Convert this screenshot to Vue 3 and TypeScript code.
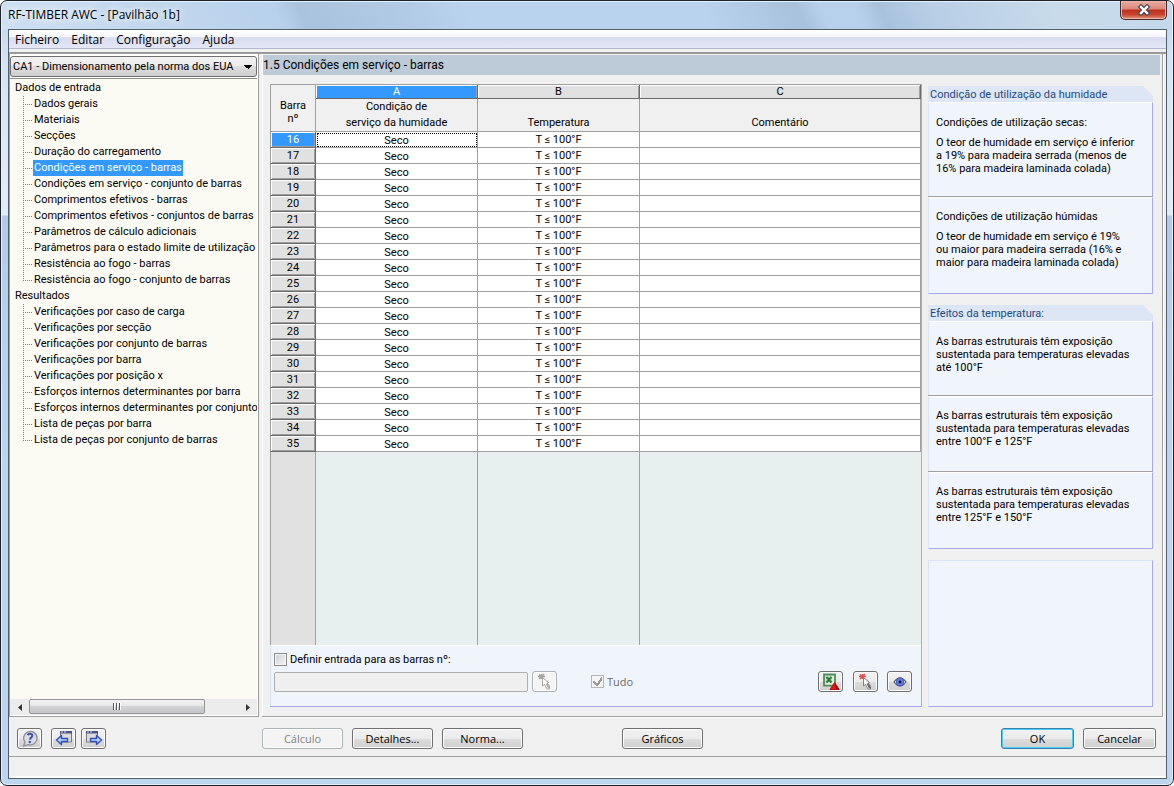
<script setup lang="ts">
import { ref } from 'vue'

interface Branch {
  label: string
  items: string[]
}

interface Note {
  heading?: string
  text: string[]
}

const menus: string[] = ['Ficheiro', 'Editar', 'Configuração', 'Ajuda']

const tree: Branch[] = [
  {
    label: 'Dados de entrada',
    items: [
      'Dados gerais',
      'Materiais',
      'Secções',
      'Duração do carregamento',
      'Condições em serviço - barras',
      'Condições em serviço - conjunto de barras',
      'Comprimentos efetivos - barras',
      'Comprimentos efetivos - conjuntos de barras',
      'Parâmetros de cálculo adicionais',
      'Parâmetros para o estado limite de utilização',
      'Resistência ao fogo - barras',
      'Resistência ao fogo - conjunto de barras',
    ],
  },
  {
    label: 'Resultados',
    items: [
      'Verificações por caso de carga',
      'Verificações por secção',
      'Verificações por conjunto de barras',
      'Verificações por barra',
      'Verificações por posição x',
      'Esforços internos determinantes por barra',
      'Esforços internos determinantes por conjunto',
      'Lista de peças por barra',
      'Lista de peças por conjunto de barras',
    ],
  },
]

const humidity: Note[] = [
  {
    heading: 'Condições de utilização secas:',
    text: ['O teor de humidade em serviço é inferior', 'a 19% para madeira serrada (menos de', '16% para madeira laminada colada)'],
  },
  {
    heading: 'Condições de utilização húmidas',
    text: ['O teor de humidade em serviço é 19%', 'ou maior para madeira serrada (16% e', 'maior para madeira laminada colada)'],
  },
]

const temperature: Note[] = ['até 100°F', 'entre 100°F e 125°F', 'entre 125°F e 150°F'].map((range) => ({
  text: ['As barras estruturais têm exposição', 'sustentada para temperaturas elevadas', range],
}))

const members: number[] = Array.from({ length: 20 }, (_, i) => 16 + i)

const page = ref('Condições em serviço - barras')
const member = ref(16)
const setInput = ref(false)
const all = ref(true)
</script>

<template>
  <div class="window">
    <header class="titlebar">
      <h1>RF-TIMBER AWC - [Pavilhão 1b]</h1>
      <button class="close" type="button" aria-label="Fechar">
        <svg width="14" height="12" viewBox="0 0 14 12">
          <path d="M4 3 10 9M10 3 4 9" stroke="#45485c" stroke-width="4.600" stroke-linecap="square" />
          <path d="M4 3 10 9M10 3 4 9" stroke="#fff" stroke-width="2.400" stroke-linecap="square" />
        </svg>
      </button>
    </header>

    <div class="client">
      <nav class="menubar">
        <button v-for="m in menus" :key="m" type="button">{{ m }}</button>
      </nav>

      <div class="work">
        <aside class="side">
          <div class="case">
            <select aria-label="Caso">
              <option>CA1 - Dimensionamento pela norma dos EUA</option>
            </select>
          </div>
          <ul class="tree">
            <li v-for="b in tree" :key="b.label">
              <span class="root">{{ b.label }}</span>
              <ul class="leaves">
                <li v-for="item in b.items" :key="item">
                  <button type="button" :class="{ selected: item === page }" @click="page = item">{{ item }}</button>
                </li>
              </ul>
            </li>
          </ul>
          <div class="hscroll">
            <button class="arrow" type="button" aria-label="Esquerda">
              <svg width="4" height="7" viewBox="0 0 4 7"><path d="M4 0v7L0 3.500z" fill="#333" /></svg>
            </button>
            <div class="track"><div class="thumb"><i></i><i></i><i></i></div></div>
            <button class="arrow" type="button" aria-label="Direita">
              <svg width="4" height="7" viewBox="0 0 4 7"><path d="M0 0v7l4-3.500z" fill="#333" /></svg>
            </button>
          </div>
        </aside>

        <main class="main">
          <h2>1.5 Condições em serviço - barras</h2>
          <div class="content">
            <section class="sheet">
              <table>
                <colgroup>
                  <col class="c-no" />
                  <col class="c-a" />
                  <col class="c-a" />
                  <col />
                </colgroup>
                <thead>
                  <tr class="letters">
                    <th class="corner" rowspan="2">Barra<br />nº</th>
                    <th class="letter current">A</th>
                    <th class="letter">B</th>
                    <th class="letter">C</th>
                  </tr>
                  <tr class="names">
                    <th>Condição de<br />serviço da humidade</th>
                    <th>Temperatura</th>
                    <th>Comentário</th>
                  </tr>
                </thead>
                <tbody>
                  <tr v-for="n in members" :key="n" :class="{ active: n === member }" @click="member = n">
                    <th scope="row">{{ n }}</th>
                    <td class="wet">Seco</td>
                    <td>T ≤ 100°F</td>
                    <td></td>
                  </tr>
                </tbody>
              </table>
              <div class="rest"><i></i><i></i><i></i><i></i></div>
              <div class="tools">
                <label class="check"><input v-model="setInput" type="checkbox" />Definir entrada para as barras nº:</label>
                <div class="toolrow">
                  <input class="box" type="text" aria-label="Barras nº" disabled />
                  <button class="icon off" type="button" aria-label="Selecionar barras" disabled>
                    <svg width="18" height="18" viewBox="0 0 18 18">
                      <path d="M3 1.500 7.500 6M8 1 3 6M2 3.500h7M5.500 1v5" stroke="#a5a5a0" stroke-width="1.500" />
                      <path d="M6.500 4.500v8.500l2-1.500 2.500 4.500h2.500v-3L11 10l1.500-.5z" fill="#fff" stroke="#a5a5a0" />
                      <path d="m10.500 10.500 2.500 4.500" stroke="#b0b0aa" stroke-width="2" />
                    </svg>
                  </button>
                  <label class="check all"><input v-model="all" type="checkbox" disabled />Tudo</label>
                  <button class="icon excel" type="button" aria-label="Exportar para Excel">
                    <svg width="18" height="18" viewBox="0 0 18 18">
                      <path d="M2 1.500h11v11H2z" fill="#cfe3cc" stroke="#4f8f55" stroke-width="1.800" />
                      <path d="M3.500 11h8M11 3v8" stroke="#f4faf3" />
                      <path d="m4.500 4 5 5.500M9.500 4l-5 5.500" stroke="#2f7d38" stroke-width="2.200" />
                      <path d="M12.500 9.500 17 16.500H8z" fill="#e31a1a" stroke="#b51616" />
                      <path d="m13 10 4.500 6.500h-3.500z" fill="#8b1010" />
                    </svg>
                  </button>
                  <button class="icon pick" type="button" aria-label="Selecionar">
                    <svg width="18" height="18" viewBox="0 0 18 18">
                      <path d="M3 1.500 7.500 6M8 1 3 6M2 3.500h7M5.500 1v5" stroke="#dc5555" stroke-width="1.500" />
                      <path d="M6.500 4.500v8.500l2-1.500 2.500 4.500h2.500v-3L11 10l1.500-.5z" fill="#fff" stroke="#808080" />
                      <path d="m10.500 10.500 2.500 4.500" stroke="#666" stroke-width="2" />
                    </svg>
                  </button>
                  <button class="icon" type="button" aria-label="Ver">
                    <svg width="18" height="18" viewBox="0 0 18 18">
                      <path d="M3 9Q9 .5 15 9 9 17 3 9z" fill="#f0f2fb" stroke="#4a4f63" stroke-width="1.200" />
                      <circle cx="9" cy="9" r="3.800" fill="#6680e4" stroke="#4058b8" />
                      <circle cx="9" cy="9" r="1.400" fill="#0b1233" />
                    </svg>
                  </button>
                </div>
              </div>
            </section>

            <section class="notes">
              <h3>Condição de utilização da humidade</h3>
              <div v-for="n in humidity" :key="n.heading" class="note wide">
                <p class="lead">{{ n.heading }}</p>
                <p><template v-for="t in n.text" :key="t">{{ t }}<br /></template></p>
              </div>
              <h3 class="second">Efeitos da temperatura:</h3>
              <div v-for="n in temperature" :key="n.text[2]" class="note">
                <p><template v-for="t in n.text" :key="t">{{ t }}<br /></template></p>
              </div>
              <div class="note blank"></div>
            </section>
          </div>
        </main>
      </div>

      <footer class="actions">
        <button class="icon" type="button" aria-label="Ajuda">
          <svg width="20" height="18" viewBox="0 0 20 18">
            <path d="M3.500 16 5 12.200A6.700 6.700 0 1 1 8.500 14.600z" fill="#dcdde4" stroke="#8d8f99" stroke-width="1.300" />
            <path d="M7.800 5.300Q8.200 3.500 10.400 3.700 12.600 4 12.200 6C11.900 7.600 10.300 7.600 10 9.600" fill="none" stroke="#3c51a5" stroke-width="2" />
            <circle cx="9.800" cy="12" r="1.200" fill="#3c51a5" />
          </svg>
        </button>
        <button class="icon back" type="button" aria-label="Anterior">
          <svg width="20" height="18" viewBox="0 0 20 18">
            <path d="M6.500 1.500h11v10.500h-11z" fill="#dcdcde" stroke="#77787e" />
            <path d="M6 1h12v2.500H6z" fill="#4a5384" />
            <path d="M7 2h2M10 2h2" stroke="#cfd6f4" />
            <path d="M2.500 10 7.500 5.500V8.500h6v3h-6v3z" fill="#b7d2ff" stroke="#2f51b5" stroke-width="1.400" stroke-linejoin="round" />
          </svg>
        </button>
        <button class="icon" type="button" aria-label="Seguinte">
          <svg width="20" height="18" viewBox="0 0 20 18">
            <path d="M2.500 1.500h11v10.500h-11z" fill="#dcdcde" stroke="#77787e" />
            <path d="M2 1h12v2.500H2z" fill="#4a5384" />
            <path d="M3 2h2M6 2h2" stroke="#cfd6f4" />
            <path d="M17.500 10 12.500 5.500V8.500h-6v3h6v3z" fill="#b7d2ff" stroke="#2f51b5" stroke-width="1.400" stroke-linejoin="round" />
          </svg>
        </button>
        <div class="commands">
          <button class="push" type="button" disabled>Cálculo</button>
          <button class="push" type="button">Detalhes...</button>
          <button class="push" type="button">Norma...</button>
          <button class="push charts" type="button">Gráficos</button>
        </div>
        <button class="push end ok" type="button">OK</button>
        <button class="push end" type="button">Cancelar</button>
      </footer>
      <div class="status" role="status"></div>
    </div>
  </div>
</template>

<style>
body {
  margin: 0;
  background: #fff;
}
</style>

<style scoped>
* {
  box-sizing: border-box;
}

h1, h2, h3, p, ul {
  margin: 0;
  padding: 0;
  font-weight: normal;
  list-style: none;
}

button, input, select {
  margin: 0;
  padding: 0;
  border: 0;
  font: inherit;
  color: inherit;
  background: none;
}

svg {
  display: block;
  flex: none;
  fill: none;
}

.window {
  display: flex;
  flex-direction: column;
  min-height: 100vh;
  padding: 0 6px 6px 7px;
  border: 1px solid #1d2128;
  border-radius: 7px;
  box-shadow: inset 0 0 0 1px #e6f1fb;
  background:
    linear-gradient(65deg, #cfe0f2 0, #b9d2ec 22%, #b7d1ec 24%, #a9c3df 26%, #b0cae6 34%, #b9d3ee 40%, #b9d3ee 60%, #a8c2de 68%, #b7d1ec 70%, #b7d1ec 73%, #a8c2de 75%, #b7cee6 79%, #c9dbea 90%, #c3d8ec) 0 0 / 100% 29px no-repeat,
    linear-gradient(#b9d1ea 0, #d4e4f4 60px, #e2ecf7 214px, #b3cbe6 215px, #bcd6f0 60%);
  font-family: "Open Sans", "Noto Sans", sans-serif;
  font-size: 11px;
  color: #000;
}

.titlebar {
  display: flex;
  justify-content: space-between;
  align-items: flex-start;
  height: 28px;
}

.titlebar h1 {
  font-size: 12px;
  line-height: 28px;
  text-shadow: 0 0 8px #fff, 0 0 8px #fff;
}

.close {
  display: flex;
  justify-content: center;
  align-items: center;
  width: 47px;
  height: 19px;
  border: 1px solid #46292c;
  border-top: 0;
  border-radius: 0 0 5px 5px;
  box-shadow: inset 0 0 0 1px #eab6ac;
  background: linear-gradient(#e9aca0, #d98878 45%, #b92f1c 50%, #c8442e 75%, #e39278);
}

.client {
  display: flex;
  flex-direction: column;
  flex: 1;
  border: 1px solid #52606e;
  background: #f0f0f0;
}

.menubar {
  display: flex;
  gap: 12px;
  height: 19px;
  padding-left: 6px;
  border-bottom: 1px solid #b4b9cf;
  background: linear-gradient(#fff, #f5f7fc 40%, #d8dcf0 42%, #e3e7f6);
  font-size: 12px;
  line-height: 20px;
}

.work {
  display: flex;
  flex: 1;
  margin-top: 3px;
  border-top: 2px solid #9a9a9a;
}

.side {
  display: flex;
  flex-direction: column;
  width: 250px;
  padding: 2px 1px 1px 0;
  border: solid #a0a0a0;
  border-width: 0 1px 1px;
  background: #fff;
  font-family: Roboto, "Liberation Sans", sans-serif;
}

.case {
  padding-bottom: 1px;
  border-bottom: 1px solid #8f8f8f;
  background: #fff;
}

.case select {
  display: block;
  width: 100%;
  height: 21px;
  padding: 0 20px 0 2px;
  border: 1px solid #707070;
  border-radius: 3px;
  appearance: none;
  background:
    conic-gradient(from 315deg at 50% 100%, #000 90deg, transparent 0) right 4px top 8px / 8px 4px no-repeat,
    linear-gradient(#f2f2f2, #ebebeb 50%, #dddddd 50%, #cfcfcf);
}

.tree {
  flex: 1;
  overflow: hidden;
  padding: 1px 0 0 5px;
  background: #fcfbf3;
  line-height: 16px;
  white-space: nowrap;
}

.root {
  display: block;
}

.leaves {
  padding-left: 8px;
}

.leaves li {
  height: 16px;
  padding-left: 10px;
  background:
    repeating-linear-gradient(#808080 0 1px, transparent 1px 2px) 0 0 / 1px 100% no-repeat,
    repeating-linear-gradient(90deg, #808080 0 1px, transparent 1px 2px) 0 8px / 9px 1px no-repeat;
}

.leaves li:last-child {
  background-size: 1px 8px, 9px 1px;
}

.leaves button {
  height: 16px;
  padding: 0 1px;
}

.leaves .selected {
  color: #fff;
  background: #3399ff;
}

.hscroll {
  display: flex;
  height: 16px;
  background: #ececec;
}

.arrow {
  display: flex;
  justify-content: center;
  align-items: center;
  width: 19px;
}

.track {
  flex: 1;
}

.thumb {
  display: flex;
  justify-content: center;
  align-items: center;
  gap: 1px;
  width: 84%;
  height: 15px;
  border: 1px solid #959595;
  border-radius: 2px;
  background: linear-gradient(#f3f3f3, #e6e6e7 48%, #d2d3d5 50%, #c4c5c8);
}

.thumb i {
  width: 2px;
  height: 7px;
  border-left: 1px solid #555;
  background: #fff;
}

.main {
  display: flex;
  flex-direction: column;
  flex: 1;
  min-width: 0;
  margin: 0 3px 0 3px;
  padding: 1px 2px 9px 0;
  border: solid #a0a0a0;
  border-width: 0 1px 1px 0;
  box-shadow: inset 1px 0 #fff, 1px 1px #fff;
  font-family: Roboto, "Liberation Sans", sans-serif;
}

.main h2 {
  height: 20px;
  margin-left: 1px;
  background: #bdcad7;
  font-size: 12px;
  line-height: 20px;
}

.content {
  display: flex;
  flex: 1;
  gap: 6px;
  padding: 9px 7px 0 8px;
}

.sheet {
  display: flex;
  flex-direction: column;
  flex: 1;
  min-width: 0;
  border: solid #a8a8ec;
  border-width: 0 1px 1px 0;
}

table {
  width: 100%;
  table-layout: fixed;
  border-collapse: separate;
  border-spacing: 0;
  border-top: 1px solid #a0a0a0;
  text-align: center;
}

.c-no {
  width: 46px;
}

.c-a {
  width: 162px;
}

th, td {
  height: 16px;
  padding: 0;
  border: solid #a0a0a0;
  border-width: 0 1px 1px 0;
  font-weight: normal;
  line-height: 15px;
  background: #fff;
}

.letters .letter {
  height: 14px;
  border-color: #696969;
  box-shadow: inset 1px 1px #fff, inset -1px 0 #a0a0a0;
  background: #e1e1e1;
  line-height: 13px;
}

.letters .current {
  color: #fff;
  background: #3399ff;
}

.corner {
  border-left-width: 1px;
  padding-top: 8px;
  line-height: 13px;
  background: #f0f0f0;
}

.names th {
  height: 33px;
  line-height: 16px;
  vertical-align: bottom;
  background: #f0f0f0;
}

tbody th {
  border-left-width: 1px;
  border-right-color: #696969;
  border-bottom-color: #696969;
  box-shadow: inset 1px 1px #fff, inset -1px -1px #a0a0a0;
  background: #e1e1e1;
}

.active th {
  color: #fff;
  background: #3399ff;
}

.wet {
  padding-top: 2px;
  line-height: 13px;
}

.active .wet {
  outline: 1px dotted #000;
  outline-offset: -2px;
}

.rest {
  display: grid;
  grid-template-columns: 46px 162px 162px 1fr;
  flex: 1;
  background: #e8efef;
}

.rest i {
  border-right: 1px solid #a0a0a0;
}

.rest i:first-child {
  border-left: 1px solid #a0a0a0;
  background: #e1e1e1;
}

.rest i:last-child {
  border: 0;
}

.tools {
  padding: 6px 9px 14px 3px;
  border-top: 1px solid #fff;
  border-left: 1px solid #d9e4f6;
  background: #f0f4fb;
}

.check {
  display: flex;
  align-items: center;
  gap: 3px;
  width: max-content;
  line-height: 15px;
}

.check input {
  width: 13px;
  height: 13px;
  border: 1px solid #8e8f8f;
  box-shadow: inset 0 0 0 1px #f4f4f4;
  appearance: none;
  background: linear-gradient(135deg, #cbcfd5, #f6f6f6);
}

.check input:checked {
  border-color: #b5b5b5;
  background:
    linear-gradient(125deg, transparent 44%, #9a9a9a 45%, #9a9a9a 66%, transparent 67%) 4px 1px / 6px 9px no-repeat,
    linear-gradient(45deg, transparent 34%, #9a9a9a 35%, #9a9a9a 68%, transparent 69%) 1px 5px / 5px 5px no-repeat,
    #f6f6f6;
}

.toolrow {
  display: flex;
  align-items: center;
  margin-top: 4px;
}

.box {
  width: 254px;
  height: 20px;
  border: 1px solid #afafaf;
  border-radius: 2px;
  background: #efefef;
}

.icon, .push {
  display: flex;
  justify-content: center;
  align-items: center;
  height: 21px;
  border: 1px solid #707070;
  border-radius: 3px;
  box-shadow: inset 0 0 0 1px #fcfcfc;
  background: linear-gradient(#f2f2f2, #ebebeb 50%, #dddddd 50%, #cfcfcf);
}

.icon {
  width: 25px;
}

.icon:disabled, .push:disabled {
  border-color: #adb2b5;
  color: #838383;
  background: #f4f4f4;
}

.off {
  margin-left: 4px;
}

.all {
  margin-left: 34px;
  color: #6d6d6d;
  font-family: "Open Sans", "Noto Sans", sans-serif;
}

.excel {
  margin-left: auto;
}

.pick {
  margin: 0 9px 0 10px;
}

.notes {
  display: flex;
  flex-direction: column;
  width: 225px;
}

.notes h3 {
  height: 16px;
  margin-top: 2px;
  padding-left: 2px;
  background: #dce6f5;
  clip-path: polygon(0 0, 215px 0, 100% 10px, 100% 100%, 0 100%);
  color: #1f497d;
  font-size: 11px;
  line-height: 17px;
}

.notes .second {
  margin-top: 11px;
}

.note {
  height: 76px;
  padding: 12px 7px 0;
  border: solid #a8a8ec;
  border-width: 1px 1px 0 1px;
  border-top-color: #fff;
  border-left-color: #d9e4f6;
  box-shadow: 0 -1px #a0a0a0;
  background: #f0f4fb;
  line-height: 13px;
}

.wide {
  height: 97px;
}

.notes h3 + .note {
  height: 75px;
  padding-top: 13px;
  box-shadow: none;
}

.notes h3 + .wide {
  height: 95px;
}

.lead {
  margin-bottom: 7px;
}

.note:has(+ h3), .note:has(+ .blank) {
  border-bottom-width: 1px;
}

.note:has(+ .blank) {
  height: 77px;
}

.blank {
  flex: 1;
  margin-top: 11px;
  border-width: 1px;
  border-top-color: #d9e4f6;
  box-shadow: none;
}

.actions {
  display: flex;
  align-items: center;
  height: 39px;
  padding: 4px 10px 0 8px;
}

.back {
  margin: 0 5px 0 9px;
}

.commands {
  display: flex;
  flex: 1;
  gap: 9px;
  margin-left: 156px;
}

.push {
  width: 81px;
}

.charts {
  margin-left: 90px;
}

.end {
  width: 73px;
  margin-left: 9px;
}

.ok {
  border-color: #3c7fb1;
  box-shadow: inset 0 0 0 1px #46d0f6;
}

.status {
  height: 22px;
  border-top: 1px solid #a0a0a0;
  border-bottom: 2px solid #fff;
}
</style>
